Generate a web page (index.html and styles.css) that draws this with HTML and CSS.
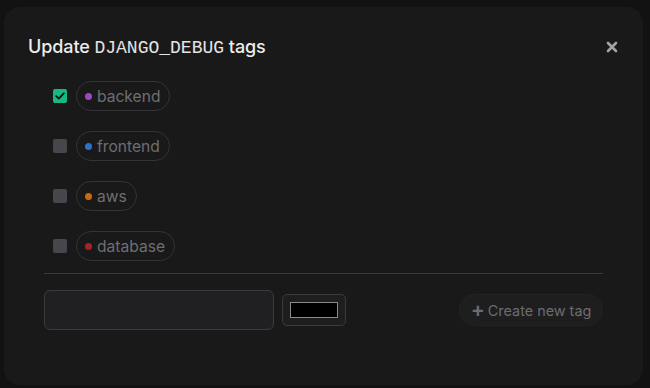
FILE: index.html
```html
<!DOCTYPE html>
<html>
<head>
<meta charset="utf-8">
<link rel="stylesheet" href="styles.css">
</head>
<body>
<div class="modal">
  <div class="header">
    <h2 class="title">Update <code class="mono">DJANGO_DEBUG</code> tags</h2>
    <button class="close" aria-label="Close">
      <svg width="12" height="12" viewBox="0 0 12 12"><path d="M2 2L10 10M10 2L2 10" stroke="#a3a3a8" stroke-width="2.6" stroke-linecap="round"/></svg>
    </button>
  </div>
  <ul class="tags">
    <li class="row">
      <span class="check checked"><svg width="10" height="8" viewBox="0 0 10 8"><path d="M1.2 4.2L3.8 6.6L8.8 1.4" stroke="#111" stroke-width="1.8" fill="none" stroke-linecap="round" stroke-linejoin="round"/></svg></span>
      <span class="pill"><span class="dot purple"></span>backend</span>
    </li>
    <li class="row">
      <span class="check"></span>
      <span class="pill"><span class="dot blue"></span>frontend</span>
    </li>
    <li class="row">
      <span class="check"></span>
      <span class="pill"><span class="dot orange"></span>aws</span>
    </li>
    <li class="row">
      <span class="check"></span>
      <span class="pill"><span class="dot red"></span>database</span>
    </li>
  </ul>
  <div class="divider"></div>
  <div class="create">
    <input class="name" type="text">
    <span class="color"><span class="swatch"></span></span>
    <button class="new"><span class="plus">+</span>Create new tag</button>
  </div>
</div>
</body>
</html>
```
FILE: styles.css
```css
* { box-sizing: border-box; }
html, body { margin: 0; padding: 0; }
body {
  width: 650px;
  height: 388px;
  background: #121213;
  font-family: Inter, "Noto Sans", sans-serif;
  overflow: hidden;
  padding: 7px 7px 0 4px;
}
.modal {
  width: 639px;
  height: 378px;
  background: #19191a;
  border-radius: 16px;
  padding: 24px 24px 0 24px;
}
.header {
  display: flex;
  justify-content: space-between;
  align-items: center;
  height: 28px;
  margin-top: 2px;
}
.title {
  margin: 0;
  font-size: 18px;
  font-weight: 500;
  color: #ececec;
  letter-spacing: -0.1px;
}
.mono {
  font-family: "Liberation Mono", "DejaVu Sans Mono", monospace;
  font-size: 18px;
  font-weight: 400;
  color: #e4e4e4;
  letter-spacing: 0;
}
.close {
  background: none;
  border: 0;
  padding: 0;
  margin-right: 1px;
  display: flex;
}
.tags {
  list-style: none;
  margin: 20px 0 0 0;
  padding: 0 0 0 25px;
  display: flex;
  flex-direction: column;
  gap: 20px;
}
.row {
  display: flex;
  align-items: center;
  gap: 9px;
  height: 30px;
}
.check {
  width: 14px;
  height: 14px;
  border-radius: 2px;
  background: #46464c;
  display: flex;
  align-items: center;
  justify-content: center;
}
.check.checked { background: #19b883; }
.pill {
  display: inline-flex;
  align-items: center;
  height: 30px;
  padding: 0 9px 0 8px;
  border: 1px solid #343436;
  border-radius: 15px;
  color: #6e6e72;
  font-size: 15.6px;
}
.dot {
  width: 7px;
  height: 7px;
  border-radius: 50%;
  margin-right: 5px;
}
.purple { background: #9849c2; }
.blue { background: #2f72c4; }
.orange { background: #c96a0e; }
.red { background: #a0242c; }
.divider {
  height: 1px;
  background: #3a3a3c;
  margin: 12px 16px 0 16px;
}
.create {
  display: flex;
  align-items: center;
  margin: 16px 16px 0 16px;
  height: 40px;
}
.name {
  width: 230px;
  height: 40px;
  background: #202023;
  border: 1px solid #3b3b3e;
  border-radius: 6px;
  margin: 0;
}
.color {
  width: 64px;
  height: 32px;
  margin-left: 8px;
  border: 1px solid #3b3b3e;
  border-radius: 5px;
  background: #1e1e20;
  display: flex;
  align-items: center;
  justify-content: center;
}
.swatch {
  width: 48px;
  height: 16px;
  background: #000;
  border: 1px solid #8a8a8a;
}
.new {
  margin-left: auto;
  width: 144px;
  height: 32px;
  border-radius: 16px;
  background: #1e1e1f;
  border: 1px solid #232325;
  color: #6c6c70;
  font-family: Inter, "Noto Sans", sans-serif;
  font-size: 14.4px;
  display: flex;
  align-items: center;
  justify-content: center;
  padding: 0;
}
.plus {
  font-size: 21px;
  font-weight: 600;
  margin-right: 3px;
  line-height: 1;
  margin-top: -2px;
}
```
